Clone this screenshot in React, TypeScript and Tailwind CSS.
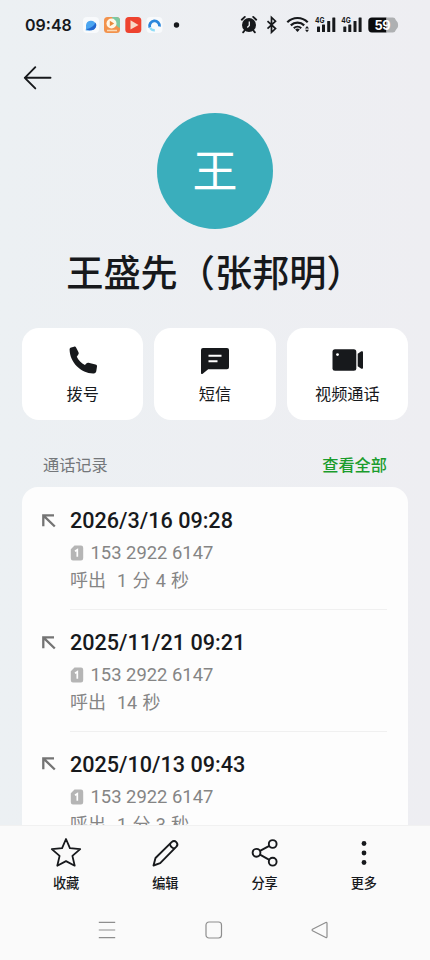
import { ReactNode } from 'react'

interface CallRecord {
  id: number
  date: string
  phone: string
  duration: string
}

const CALL_RECORDS: CallRecord[] = [
  { id: 1, date: '2026/3/16 09:28', phone: '153 2922 6147', duration: '1 分 4 秒' },
  { id: 2, date: '2025/11/21 09:21', phone: '153 2922 6147', duration: '14 秒' },
  { id: 3, date: '2025/10/13 09:43', phone: '153 2922 6147', duration: '1 分 3 秒' },
]

export default function App() {
  return (
    <div className="flex h-[960px] w-[430px] flex-col overflow-hidden bg-linear-to-r from-[#ecf0f3] to-[#eeeef2] font-['Roboto','Noto_Sans_CJK_SC',sans-serif] text-[#17191c]">
      <StatusBar />
      <div className="flex h-14 shrink-0 items-center pl-[22px]">
        <BackIcon />
      </div>
      <main className="flex min-h-0 flex-1 flex-col overflow-hidden px-[22px]">
        <div className="flex shrink-0 flex-col items-center pt-[7px]">
          <div className="flex size-[115.5px] items-center justify-center rounded-full bg-[#3aaebc] text-[45px] leading-none text-white">
            <span className="pt-[3px]">王</span>
          </div>
          <h1 className="mt-[17px] text-[37.2px] font-medium leading-[56px] whitespace-nowrap">
            王盛先（张邦明）
          </h1>
        </div>
        <div className="mt-[26px] grid shrink-0 grid-cols-3 gap-[11px]">
          <ActionCard label="拨号" icon={<PhoneIcon />} />
          <ActionCard label="短信" icon={<MessageIcon />} />
          <ActionCard label="视频通话" icon={<VideoIcon />} />
        </div>
        <div className="mt-[34.5px] flex h-6 shrink-0 items-center justify-between px-[21px] text-[16.2px]">
          <span className="text-[#74777a]">通话记录</span>
          <span className="font-medium text-[#1a9c2c]">查看全部</span>
        </div>
        <div className="mt-[8px] shrink-0 rounded-t-2xl bg-[#fdfdfd] px-[21px] pt-[2px]">
          {CALL_RECORDS.map((record) => (
            <CallRecordItem key={record.id} record={record} />
          ))}
        </div>
      </main>
      <BottomBar />
      <NavigationBar />
    </div>
  )
}

const StatusBar = () => {
  return (
    <div className="flex h-[50px] shrink-0 items-center pl-[25px] font-['Inter',sans-serif]">
      <span className="w-[58px] text-[16px] font-semibold leading-none">09:48</span>
      <svg width="100" height="20" viewBox="83 15 100 20">
        <rect x="83" y="17" width="16" height="16" rx="4" fill="#f8fafc" />
        <path d="M85.500 30.200c.8-1 .5-2.500.5-4.700a5 5 0 0 1 9.800-1.200 5 5 0 0 1-4.800 6c-2.500.2-3.500.2-5.500-.1z" fill="#4ba5f0" />
        <path d="M86.500 29c4-.5 8-3.500 9-6.500a5 5 0 0 1-4 7.800c-2 .2-4 .2-5-1.300z" fill="#2267cf" />
        <rect x="104" y="17" width="16" height="16" rx="3.500" fill="#f2924c" />
        <path d="M112 17h4.500a3.500 3.500 0 0 1 3.500 3.500V28c-3-1-7-6-8-11z" fill="#7cc8a2" />
        <circle cx="111.500" cy="23.500" r="5" fill="#fff7e8" />
        <path d="M109.800 20.800v5.400l4.400-2.700z" fill="#e88a3c" />
        <path d="M107 30.500h10" stroke="#fbd9b4" strokeWidth="1.500" />
        <rect x="125.300" y="17" width="16" height="16" rx="3.500" fill="#ee432f" />
        <path d="M130.500 20.300v9.200l8-4.600z" fill="#f8d9c6" />
        <rect x="146.500" y="17" width="16" height="16" rx="4" fill="#f8fafc" />
        <path d="M149.800 27.500a5 5 0 1 1 9.700-1" fill="none" stroke="#2a86dc" strokeWidth="2.800" />
        <path d="M150.200 27.800a5 5 0 0 0 4.600 2.400" fill="none" stroke="#8edcf6" strokeWidth="2.400" />
        <circle cx="176.500" cy="25" r="2.700" fill="#17191c" />
      </svg>
      <svg className="ml-[54px]" width="162" height="20" viewBox="237 15 162 20">
        {/* alarm */}
        <g>
          <circle cx="249" cy="25" r="7" fill="#17191c" />
          <path d="M241.800 19.700l3-2.800M256.200 19.700l-3-2.800M244.600 30.500l-1.500 1.800M253.400 30.500l1.500 1.800" stroke="#17191c" strokeWidth="1.900" strokeLinecap="round" />
          <path d="M249.300 21.500v4l-2 2" fill="none" stroke="#edeff2" strokeWidth="1.300" />
        </g>
        {/* bluetooth */}
        <path d="M267.500 21.200l8 7.400-4 3.700V17.500l4 3.700-8 7.400" fill="none" stroke="#17191c" strokeWidth="1.700" />
        {/* wifi */}
        <g fill="none" stroke="#17191c" strokeWidth="2.200">
          <path d="M287.300 22.200a14.500 14.500 0 0 1 20.400 0" />
          <path d="M290.800 25.400a9.700 9.700 0 0 1 13.400 0" />
          <path d="M293.800 28.200a5.400 5.400 0 0 1 7.400 0" />
          <path d="M295.200 29.500a3.400 3.400 0 0 1 4.600 0L297.500 32z" fill="#17191c" stroke="none" />
          <path d="M305 28.500l2-2.500 2 2.500zM305 29.800l2 2.500 2-2.500z" fill="#17191c" stroke="none" />
        </g>
        <SignalBars x={315} />
        <SignalBars x={341.3} />
        {/* battery */}
        <path d="M372 17.500h14.500v15H372a3.700 3.700 0 0 1-3.700-3.700v-7.600a3.700 3.700 0 0 1 3.700-3.700z" fill="#0b0c0e" />
        <path d="M386.500 17.500h6.200a3 3 0 0 1 3 2.200c.3 1.200 2.400 1.500 2.400 5.300s-2.100 4.100-2.400 5.300a3 3 0 0 1-3 2.200h-6.200z" fill="#aeb0b2" />
        <text x="374.500" y="29.600" fontSize="12.800" fontWeight="700" fill="#fff" textLength="16">59</text>
      </svg>
    </div>
  )
}

const SignalBars = ({ x }: { x: number }) => {
  return (
    <g fill="#17191c">
      <text x={x} y="23.300" fontSize="7.500" fontWeight="700" textLength="9.500" lengthAdjust="spacingAndGlyphs">4G</text>
      <rect x={x + 2} y="26.500" width="3" height="5.500" rx="0.500" />
      <rect x={x + 7} y="24.500" width="3" height="7.500" rx="0.500" />
      <rect x={x + 12.2} y="21" width="3" height="11" rx="0.500" />
      <rect x={x + 17.3} y="17.500" width="3" height="14.500" rx="0.500" />
    </g>
  )
}

const BackIcon = () => {
  return (
    <svg width="30" height="26" viewBox="22 65 30 26" fill="none" stroke="#17191c" strokeWidth="1.900" strokeLinecap="round" strokeLinejoin="round">
      <path d="M35.300 67.200L24.800 77.800l10.500 10.600M24.800 77.800h25.700" />
    </svg>
  )
}

interface ActionCardProps {
  label: string
  icon: ReactNode
}

const ActionCard = ({ label, icon }: ActionCardProps) => {
  return (
    <div className="flex h-[92.5px] flex-col items-center rounded-[17px] bg-white pt-[16px]">
      {icon}
      <span className="mt-[7.5px] text-[16.2px] leading-6">{label}</span>
    </div>
  )
}

const PhoneIcon = () => {
  return (
    <svg width="32" height="32" viewBox="66 344 32 32" fill="#17191c">
      <path d="M68.600 349.800c-.1-1.200.5-2 1.600-2.300l2.800-.8c1-.3 1.800.1 2.200 1l2.300 4.600c.4.800.3 1.500-.2 2.200l-1.500 2.200c1.500 3.200 4.600 6.400 8.100 8.300l1.700-1.700c.5-.5 1.200-.7 1.900-.5l7 1.700c1.100.3 1.700 1 1.500 2.100l-.7 4.500c-.2 1.400-1.200 2.300-2.600 2.300-6.300.2-12.300-2.600-16.900-7.200-4.500-4.500-7-10.300-7.200-16.400z" />
    </svg>
  )
}

const MessageIcon = () => {
  return (
    <svg width="32" height="32" viewBox="199 344 32 32">
      <path d="M203 348h24a2 2 0 0 1 2 2v17.200a2 2 0 0 1-2 2h-18.800l-5.500 4.600c-.8.600-1.700.2-1.700-.8v-23a2 2 0 0 1 2-2z" fill="#17191c" />
      <path d="M208.500 355.700h13M208.500 361.200h9" stroke="#fff" strokeWidth="2" />
    </svg>
  )
}

const VideoIcon = () => {
  return (
    <svg width="32" height="32" viewBox="331 344 32 32" fill="#17191c">
      <rect x="332.500" y="349.300" width="23.800" height="21.400" rx="2.500" />
      <path d="M357.700 353.800l3.300-2.300c.9-.5 2-.2 2 .8v15.400c0 1-1.100 1.300-2 .8l-3.300-2.300z" />
      <circle cx="337.500" cy="354.600" r="1.400" fill="#fff" />
    </svg>
  )
}

const CallRecordItem = ({ record: { date, phone, duration } }: { record: CallRecord }) => {
  return (
    <div className="flex">
      <div className="w-[27px] shrink-0 pt-[25.5px]">
        <OutgoingIcon />
      </div>
      <div className="flex h-[121.7px] flex-1 flex-col border-b border-[#f0f0f0] pt-[18.7px]">
        <div className="text-[21.6px] font-medium leading-7 text-[#17191c]">{date}</div>
        <div className="mt-[4px] flex items-center text-[18.4px] leading-7 text-[#858585]">
          <SimIcon />
          <span className="ml-[6.5px]">{phone}</span>
        </div>
        <div className="flex gap-[11px] text-[18px] leading-7 text-[#858585]">
          <span>呼出</span>
          <span className="[word-spacing:0.8px]">{duration}</span>
        </div>
      </div>
    </div>
  )
}

const OutgoingIcon = () => {
  return (
    <svg className="-ml-px" width="14" height="14" viewBox="0 0 14 14" fill="none" stroke="#747474" strokeWidth="2.300">
      <path d="M12 1.300H1.300v11M1.300 1.400L12.800 12.500" />
    </svg>
  )
}

const SimIcon = () => {
  return (
    <svg width="14" height="16" viewBox="0 0 14 16">
      <path d="M4.500.5H11A2.200 2.200 0 0 1 13.200 2.700v10.600A2.200 2.200 0 0 1 11 15.500H3A2.200 2.200 0 0 1 .8 13.300V4.200z" fill="#b5b5b5" />
      <path d="M5 6.200l2.300-1.500v7" fill="none" stroke="#fff" strokeWidth="1.700" />
    </svg>
  )
}

const BottomBar = () => {
  return (
    <div className="grid h-[74px] shrink-0 grid-cols-4 border-t border-[#f1f1f1] bg-[#fafafa] px-[16.5px]">
      <BottomBarItem label="收藏" icon={<StarIcon />} />
      <BottomBarItem label="编辑" icon={<PencilIcon />} />
      <BottomBarItem label="分享" icon={<ShareIcon />} />
      <BottomBarItem label="更多" icon={<MoreIcon />} />
    </div>
  )
}

const BottomBarItem = ({ label, icon }: ActionCardProps) => {
  return (
    <div className="flex flex-col items-center pt-[11px]">
      {icon}
      <span className="mt-[5px] text-[13.2px] font-medium leading-5">{label}</span>
    </div>
  )
}

const StarIcon = () => {
  return (
    <svg width="32" height="32" viewBox="0 0 32 32" fill="none" stroke="#17191c" strokeWidth="1.800" strokeLinejoin="round">
      <path d="M16 2l3.900 9.200 10.300.9-7.800 6.800 2.300 9.800L16 24.100l-8.700 4.600 2.300-9.800-7.800-6.800 10.300-.9z" />
    </svg>
  )
}

const PencilIcon = () => {
  return (
    <svg width="32" height="32" viewBox="0 0 32 32" fill="none" stroke="#17191c" strokeWidth="1.900" strokeLinejoin="round">
      <path d="M4.500 28.500l2-7.500L22.600 5.100c1.700-1.500 3.500-1.200 4.700 0s1.500 3 .1 4.600L11.200 26.100z" />
      <path d="M21 6.700c.2 2.700 1.800 4.300 4.700 4.700" />
    </svg>
  )
}

const ShareIcon = () => {
  return (
    <svg width="32" height="32" viewBox="0 0 32 32" fill="none" stroke="#17191c" strokeWidth="1.900">
      <circle cx="7.500" cy="15.800" r="3.900" />
      <circle cx="23.700" cy="7" r="3.900" />
      <circle cx="23.700" cy="24.700" r="3.900" />
      <path d="M11 13.900l9.300-5M11 17.700l9.300 5.100" />
    </svg>
  )
}

const MoreIcon = () => {
  return (
    <svg width="32" height="32" viewBox="0 0 32 32" fill="#17191c">
      <circle cx="16" cy="6.500" r="2.400" />
      <circle cx="16" cy="16" r="2.400" />
      <circle cx="16" cy="25.500" r="2.400" />
    </svg>
  )
}

const NavigationBar = () => {
  return (
    <div className="flex h-[61px] shrink-0 items-center justify-between bg-[#fafafa] pl-[98px] pr-[101px]">
      <svg width="18" height="18" viewBox="0 0 18 18" stroke="#8e8e8e" strokeWidth="1.200">
        <path d="M.8 1.300h16.400M.8 9h16.400M.8 16.700h16.400" />
      </svg>
      <svg width="18" height="18" viewBox="0 0 18 18" fill="none" stroke="#8e8e8e" strokeWidth="1.200">
        <rect x="1" y="1" width="15.500" height="16" rx="3" />
      </svg>
      <svg width="18" height="18" viewBox="0 0 18 18" fill="none" stroke="#8e8e8e" strokeWidth="1.200" strokeLinejoin="round">
        <path d="M14.800 1.500L1.500 8.300c-.5.400-.5 1 0 1.400l13.300 6.800c.7.300 1.200 0 1.200-.7V2.200c0-.7-.5-1-1.200-.7z" />
      </svg>
    </div>
  )
}
